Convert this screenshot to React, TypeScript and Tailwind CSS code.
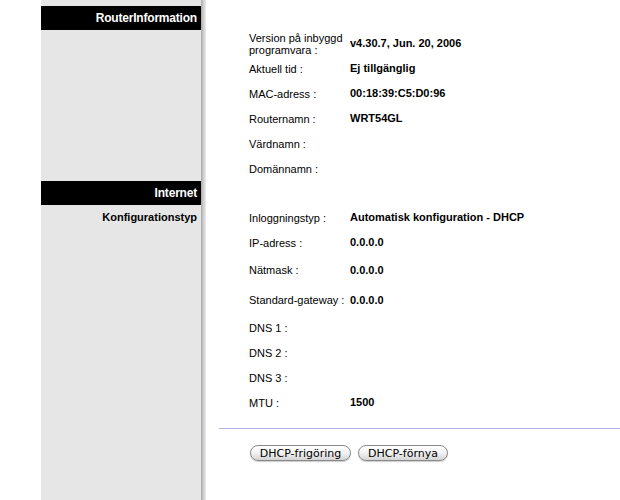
import type { ReactNode } from "react";

const font = { fontFamily: '"Liberation Sans", Arial, sans-serif' };

function Side({ children, grow = false }: { children?: ReactNode; grow?: boolean }) {
  return (
    <div className={`flex w-[165px] shrink-0 ${grow ? "flex-1" : ""}`}>
      <div className="flex w-[160px] flex-col bg-[#e6e6e6]">{children}</div>
      <div className="w-[5px] bg-gradient-to-r from-[#a9a9a9] via-[#cfcfcf] to-[#ececec]" />
    </div>
  );
}

function HeaderBar({ title }: { title: string }) {
  return (
    <div className="flex h-[24px] items-center justify-end bg-black pr-[4px] text-[12px] font-bold tracking-[-0.2px] text-white">
      {title}
    </div>
  );
}

function Row({ label, value, h = "h-[25px]" }: { label: ReactNode; value?: string; h?: string }) {
  return (
    <div className={`flex items-center ${h}`}>
      <div className="w-[101px] shrink-0 leading-[12px]">{label}</div>
      {value && <div className="font-bold">{value}</div>}
    </div>
  );
}

function PillButton({ children, w }: { children: ReactNode; w: string }) {
  return (
    <button
      className={`flex h-[16px] ${w} items-center justify-center rounded-full border border-[#8a8a8a] bg-gradient-to-b from-white via-[#f2f2f2] to-[#d4d4d4] text-[11px] leading-none text-black shadow-[0_1px_1px_rgba(0,0,0,0.2)]`}
      style={{ fontFamily: '"DejaVu Sans", Verdana, sans-serif' }}
    >
      {children}
    </button>
  );
}

export default function App() {
  return (
    <div className="flex h-[500px] w-[620px] overflow-hidden bg-white text-[11px] text-black" style={font}>
      <div className="w-[41px] shrink-0" />
      <div className="flex flex-1 flex-col">
        {/* top strip */}
        <div className="flex h-[6px]">
          <Side />
          <div className="flex-1" />
        </div>

        {/* Router information */}
        <div className="flex">
          <Side>
            <HeaderBar title="RouterInformation" />
          </Side>
          <div className="flex-1 pl-[43px] pt-[25px]">
            <Row
              label={
                <>
                  Version på inbyggd
                  <br />
                  programvara :
                </>
              }
              value="v4.30.7, Jun. 20, 2006"
            />
            <Row label="Aktuell tid :" value="Ej tillgänglig" />
            <Row label="MAC-adress :" value="00:18:39:C5:D0:96" />
            <Row label="Routernamn :" value="WRT54GL" />
            <Row label="Värdnamn :" />
            <Row label="Domännamn :" />
          </div>
        </div>

        {/* Internet */}
        <div className="flex">
          <Side>
            <HeaderBar title="Internet" />
            <div className="flex h-[25px] items-center justify-end pr-[4px] font-bold">Konfigurationstyp</div>
          </Side>
          <div className="flex-1 pt-[24px]">
            <div className="pl-[43px]">
              <Row label="Inloggningstyp :" value="Automatisk konfiguration - DHCP" />
              <Row label="IP-adress :" value="0.0.0.0" />
              <Row label="Nätmask :" value="0.0.0.0" h="h-[30px]" />
              <Row label="Standard-gateway :" value="0.0.0.0" h="h-[30px]" />
              <Row label="DNS 1 :" />
              <Row label="DNS 2 :" />
              <Row label="DNS 3 :" />
              <Row label="MTU :" value="1500" />
            </div>
            <div className="ml-[13px] mt-[13px] h-px bg-[#b4b4e6]" />
            <div className="flex gap-[7px] pl-[44px] pt-[16px]">
              <PillButton w="w-[101px]">DHCP-frigöring</PillButton>
              <PillButton w="w-[90px]">DHCP-förnya</PillButton>
            </div>
          </div>
        </div>

        {/* filler */}
        <div className="flex flex-1">
          <Side grow />
          <div className="flex-1" />
        </div>
      </div>
    </div>
  );
}
